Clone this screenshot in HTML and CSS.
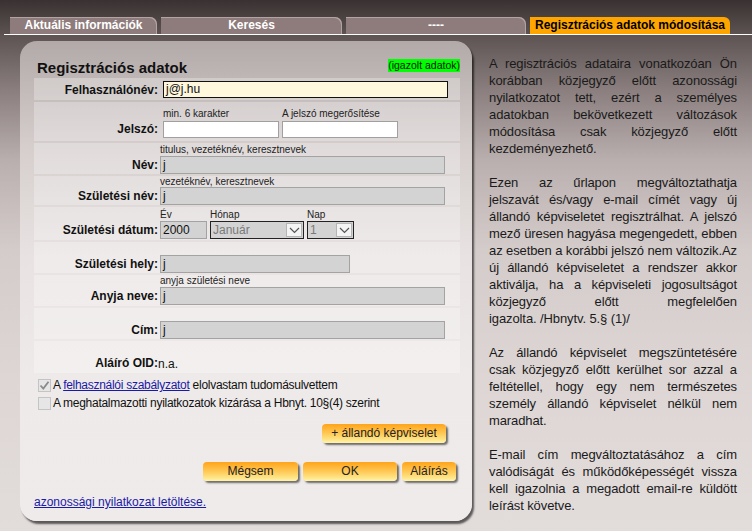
FILE: index.html
```html
<!DOCTYPE html>
<html lang="hu">
<head>
<meta charset="utf-8">
<title>Regisztrációs adatok módosítása</title>
<link rel="stylesheet" href="styles.css">
</head>
<body>
<nav class="tabs">
  <a class="tab t1">Aktuális információk</a>
  <a class="tab t2">Keresés</a>
  <a class="tab t3">----</a>
  <a class="tab active">Regisztrációs adatok módosítása</a>
</nav>
<main class="main">
  <section class="panel">
    <div class="head">
      <h1 class="title">Regisztrációs adatok</h1>
      <span class="badge">(igazolt adatok)</span>
    </div>
    <div class="rows">
      <div class="row r-user">
        <div class="lbl">Felhasználónév:</div>
        <div class="field shift"><div class="inp user">j@j.hu</div></div>
      </div>
      <div class="row r-pass">
        <div class="lbl">Jelszó:</div>
        <div class="field shift pair">
          <div class="col"><div class="hint">min. 6 karakter</div><div class="inp pass"></div></div>
          <div class="col"><div class="hint">A jelszó megerősítése</div><div class="inp pass"></div></div>
        </div>
      </div>
      <div class="row r-name">
        <div class="lbl">Név:</div>
        <div class="field"><div class="hint">titulus, vezetéknév, keresztnevek</div><div class="inp gray wide">j</div></div>
      </div>
      <div class="row r-birthname">
        <div class="lbl">Születési név:</div>
        <div class="field"><div class="hint short">vezetéknév, keresztnevek</div><div class="inp gray wide">j</div></div>
      </div>
      <div class="row">
        <div class="lbl">Születési dátum:</div>
        <div class="field pair date">
          <div class="col"><div class="hint">Év</div><div class="inp gray year">2000</div></div>
          <div class="col"><div class="hint">Hónap</div>
            <div class="sel month"><span class="sel-txt">Január</span><span class="arrow"><svg width="11" height="7" viewBox="0 0 11 7"><path d="M1 1 L5.5 5.5 L10 1" fill="none" stroke="#555" stroke-width="1.2"/></svg></span></div>
          </div>
          <div class="col"><div class="hint">Nap</div>
            <div class="sel day"><span class="sel-txt">1</span><span class="arrow"><svg width="11" height="7" viewBox="0 0 11 7"><path d="M1 1 L5.5 5.5 L10 1" fill="none" stroke="#555" stroke-width="1.2"/></svg></span></div>
          </div>
        </div>
      </div>
      <div class="row r-place">
        <div class="lbl">Születési hely:</div>
        <div class="field"><div class="hint">&nbsp;</div><div class="inp gray place">j</div></div>
      </div>
      <div class="row r-anya">
        <div class="lbl">Anyja neve:</div>
        <div class="field"><div class="hint">anyja születési neve</div><div class="inp gray wide">j</div></div>
      </div>
      <div class="row r-tight">
        <div class="lbl">Cím:</div>
        <div class="field"><div class="hint">&nbsp;</div><div class="inp gray wide">j</div></div>
      </div>
      <div class="row r-oid">
        <div class="lbl">Aláíró OID:</div>
        <div class="field"><div class="hint">&nbsp;</div><div class="oid">n.a.</div></div>
      </div>
    </div>
    <div class="checks">
      <div class="check"><span class="box"><svg width="11" height="11" viewBox="0 0 11 11"><path d="M1.5 5.5 L4.3 8.5 L9.5 1.8" fill="none" stroke="#8a8a8a" stroke-width="1.8"/></svg></span><span class="ctext">A <a class="link">felhasználói szabályzatot</a> elolvastam tudomásulvettem</span></div>
      <div class="check"><span class="box"></span><span class="ctext">A meghatalmazotti nyilatkozatok kizárása a Hbnyt. 10§(4) szerint</span></div>
    </div>
    <div class="btnrow one">
      <span class="btn b-rep">+ állandó képviselet</span>
    </div>
    <div class="btnrow two">
      <span class="btn b-cancel">Mégsem</span>
      <span class="btn b-ok">OK</span>
      <span class="btn b-sign">Aláírás</span>
    </div>
    <a class="link dl">azonossági nyilatkozat letöltése.</a>
  </section>
  <aside class="info">
    <p>A regisztrációs adataira vonatkozóan Ön korábban közjegyző előtt azonossági nyilatkozatot tett, ezért a személyes adatokban bekövetkezett változások módosítása csak közjegyző előtt kezdeményezhető.</p>
    <p>Ezen az űrlapon megváltoztathatja jelszavát és/vagy e-mail címét vagy új állandó képviseletet regisztrálhat. A jelszó mező üresen hagyása megengedett, ebben az esetben a korábbi jelszó nem változik.Az új állandó képviseletet a rendszer akkor aktiválja, ha a képviseleti jogosultságot közjegyző előtt megfelelően igazolta.&nbsp;/Hbnytv.&nbsp;5.§&nbsp;(1)/</p>
    <p>Az állandó képviselet megszüntetésére csak közjegyző előtt kerülhet sor azzal a feltétellel, hogy egy nem természetes személy állandó képviselet nélkül nem maradhat.</p>
    <p>E-mail cím megváltoztatásához a cím valódiságát és működőképességét vissza kell igazolnia a megadott email-re küldött leírást követve.</p>
  </aside>
</main>
</body>
</html>
```
FILE: styles.css
```css
html, body {
  margin: 0;
  height: 100%;
}
body {
  font-family: "Liberation Sans", Arial, sans-serif;
  font-size: 12px;
  color: #111;
  background: linear-gradient(#3a3232 0px, #5c5352 35px, #8a7f7e 90px, #b9afae 160px, #d4cccb 250px, #ddd6d5 380px, #e2dcdb 531px);
  overflow: hidden;
}

/* tabs */
.tabs {
  display: flex;
  gap: 4px;
  padding: 17px 0 0 6px;
  margin-left: 4px;
  border-bottom: 1px solid #fff;
  height: 17px;
}
.tab {
  display: block;
  height: 17px;
  line-height: 17px;
  background: #8e7b7b;
  color: #fff;
  font-weight: bold;
  font-size: 12px;
  text-align: center;
  border-top-right-radius: 7px;
  box-shadow: inset -1px 1px 0 #b3a3a3;
}
.t1 { width: 147px; }
.t2 { width: 181px; }
.t3 { width: 180px; }
.tab.active {
  width: 200px;
  background: #ffa500;
  color: #000;
  box-shadow: none;
  border-top-right-radius: 6px;
}

/* layout */
.main {
  display: flex;
  align-items: flex-start;
  padding: 6px 0 0 20px;
}
.panel {
  width: 426px;
  height: 456px;
  padding: 12px 12px 12px 14px;
  border-radius: 17px;
  background: linear-gradient(#b2aaa8 0%, #d5cecd 22%, #e8e3e2 45%, #eeeae9 70%, #efebea 100%);
  box-shadow: 2px 3px 2px rgba(0, 0, 0, 0.6);
  display: flex;
  flex-direction: column;
}

.head {
  display: flex;
  justify-content: space-between;
  align-items: flex-start;
  padding-left: 3px;
  height: 34px;
}
.title {
  margin: 6px 0 0;
  font-size: 15px;
  font-weight: bold;
  color: #111;
}
.badge {
  margin-top: 6px;
  background: #00ff00;
  font-size: 10.5px;
  line-height: 13px;
  color: #111;
}

/* rows */
.rows {
  display: flex;
  flex-direction: column;
  gap: 2px;
}
.row {
  display: flex;
  align-items: flex-end;
  background: rgba(255, 255, 255, 0.28);
  padding: 2px 0 1px;
}
.r-user { padding: 3px 0 2px; align-items: center; }
.r-pass { padding: 6px 0 3px; }
.r-name { padding: 1px 0 0; }
.r-birthname { padding: 0; }
.r-place { padding: 1px 0 0; }
.r-tight { padding: 1px 0 0; }
.r-anya { padding: 0 0 1px; }
.r-oid { padding: 3px 0 1px; }
.lbl {
  width: 124px;
  flex: none;
  text-align: right;
  font-weight: bold;
  font-size: 12px;
  line-height: 16px;
  padding-bottom: 1px;
  color: #111;
}
.r-user .lbl { padding-bottom: 0; }
.field {
  margin-left: 2px;
  display: flex;
  flex-direction: column;
}
.field.shift { margin-left: 5px; }
.field.pair { flex-direction: row; gap: 3px; }
.field.date { gap: 3px; }
.col { display: flex; flex-direction: column; }
.hint {
  font-size: 10px;
  line-height: 12px;
  height: 12px;
  color: #222;
}
.hint.short { height: 11px; line-height: 11px; }
.r-pass .hint { height: 13px; }
.inp {
  box-sizing: border-box;
  height: 18px;
  line-height: 16px;
  font-size: 12px;
  padding: 0 2px;
  color: #111;
}
.inp.user {
  width: 285px;
  height: 17px;
  line-height: 15px;
  background: #fff8dc;
  border: 1px solid #111;
}
.inp.pass {
  width: 116px;
  height: 17px;
  background: #fff;
  border: 1px solid #a0a0a0;
}
.inp.gray {
  background: #d3d3d3;
  border: 1px solid #a3a3a3;
}
.wide { width: 285px; }
.place { width: 190px; }
.year { width: 47px; }
.sel {
  box-sizing: border-box;
  height: 18px;
  display: flex;
  align-items: stretch;
  background: #d3d3d3;
  border: 1px solid #222;
  color: #7a7a7a;
  font-size: 12px;
}
.month { width: 94px; }
.day { width: 47px; }
.sel-txt {
  flex: 1;
  line-height: 16px;
  padding-left: 2px;
}
.arrow {
  width: 16px;
  margin: 1px;
  background: #f4f4f4;
  border: 1px solid #b5b5b5;
  box-sizing: border-box;
  display: flex;
  align-items: center;
  justify-content: center;
}
.oid {
  font-size: 12px;
  line-height: 16px;
  height: 16px;
  margin-left: -2px;
}

/* checks */
.checks {
  display: flex;
  flex-direction: column;
  gap: 4px;
  margin-top: 5px;
  padding-left: 4px;
}
.check {
  display: flex;
  align-items: center;
  font-size: 12px;
  line-height: 14px;
  color: #111;
}
.ctext { letter-spacing: -0.28px; }
.box {
  box-sizing: border-box;
  width: 13px;
  height: 13px;
  margin-right: 2px;
  background: #e6e6e6;
  border: 1px solid #c4c4c4;
  display: flex;
  align-items: center;
  justify-content: center;
}
.link {
  color: #1a1aa8;
  text-decoration: underline;
}

/* buttons */
.btnrow {
  display: flex;
  justify-content: flex-end;
  gap: 5px;
}
.btnrow.one { margin-top: 14px; padding-right: 14px; }
.btnrow.two { margin-top: 19px; padding-right: 4px; }
.btn {
  display: block;
  height: 19px;
  line-height: 19px;
  text-align: center;
  font-size: 12px;
  color: #222;
  border-radius: 4px;
  background: linear-gradient(#ffa41a 0%, #ffc550 45%, #ffe78a 85%, #fff2b0 100%);
  box-shadow: 2px 2px 2px rgba(0, 0, 0, 0.55);
}
.b-rep { width: 124px; }
.b-cancel { width: 95px; }
.b-ok { width: 94px; }
.b-sign { width: 54px; }

.dl {
  margin-top: 14px;
  font-size: 12px;
}

/* info text */
.info {
  width: 248px;
  margin-left: 17px;
  padding-top: 14px;
  font-size: 13px;
  line-height: 17px;
  letter-spacing: -0.1px;
  color: #1a1a1a;
  text-align: justify;
}
.info p {
  margin: 0 0 17px;
}
```
